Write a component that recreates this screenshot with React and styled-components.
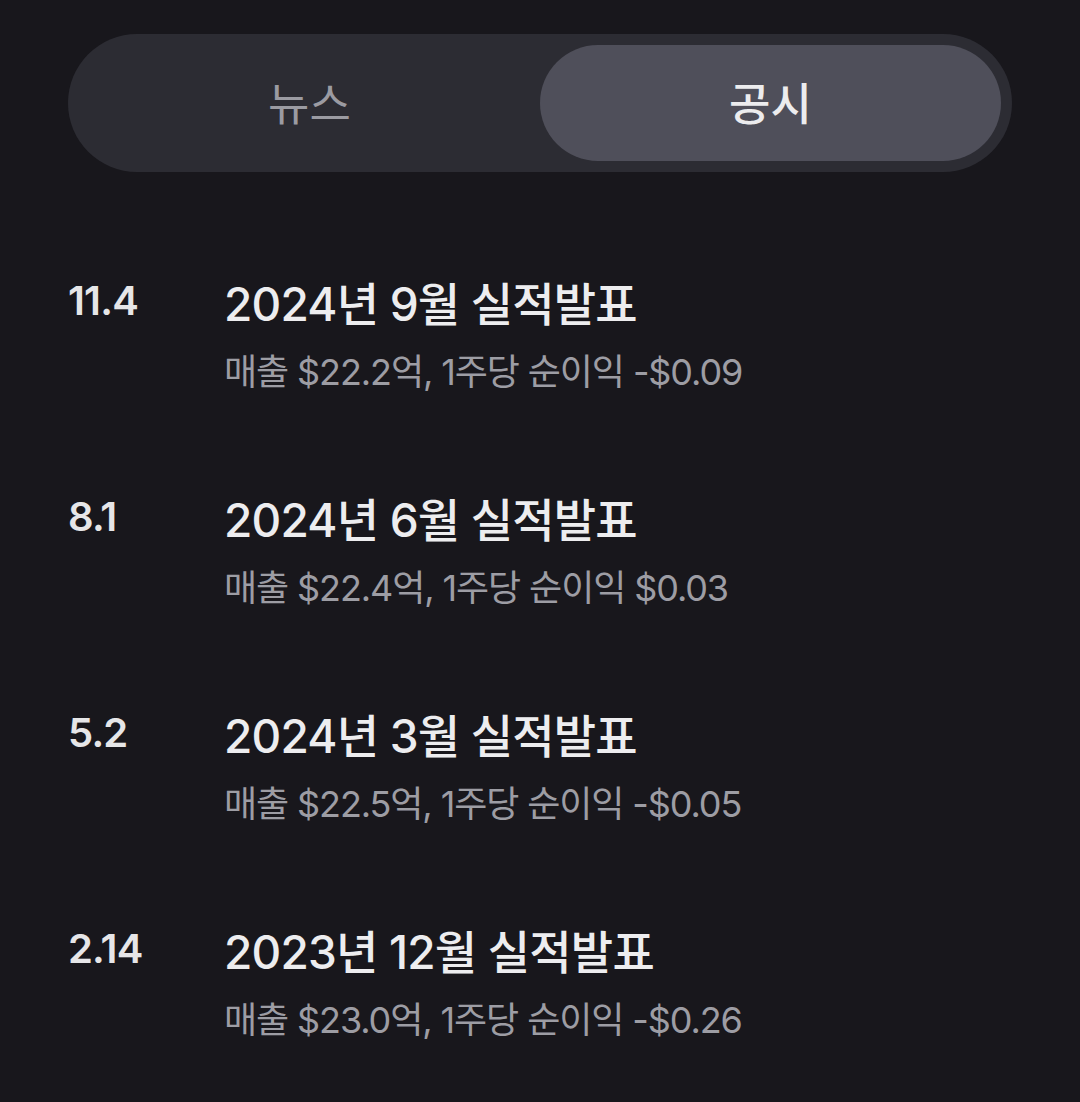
import React, { useState } from "react";
import styled, { createGlobalStyle } from "styled-components";

const GlobalStyle = createGlobalStyle`
    html, body {
        margin: 0;
        padding: 0;
        background: #18171c;
    }
    body {
        font-family: Inter, "Noto Sans CJK KR", sans-serif;
        -webkit-font-smoothing: antialiased;
    }
`;

const Page = styled.div`
    width: 1080px;
    height: 1102px;
    background: #18171c;
    padding: 34px 68px 0;
    box-sizing: border-box;
    overflow: hidden;
`;

const Tabs = styled.div`
    display: grid;
    grid-template-columns: 1fr 1fr;
    height: 138px;
    padding: 11px;
    box-sizing: border-box;
    background: #2c2c33;
    border-radius: 69px;
`;

const Tab = styled.button`
    border: 0;
    border-radius: 58px;
    padding: 0 0 4px;
    background: ${(p) => (p.$active ? "#4f4f5a" : "transparent")};
    color: ${(p) => (p.$active ? "#ececee" : "#9b9ba2")};
    font-family: inherit;
    font-size: 45px;
    font-weight: ${(p) => (p.$active ? 500 : 400)};
    cursor: pointer;
`;

const List = styled.div`
    display: flex;
    flex-direction: column;
    gap: 96px;
    margin-top: 104px;
`;

const Item = styled.div`
    display: grid;
    grid-template-columns: 156px 1fr;
`;

const Date = styled.div`
    color: #e6e6e8;
    font-size: 40px;
    font-weight: 600;
    letter-spacing: -0.8px;
    line-height: 50px;
`;

const Details = styled.div`
    display: flex;
    flex-direction: column;
    gap: 16px;
`;

const Title = styled.div`
    color: #ededef;
    font-size: 46px;
    font-weight: 500;
    letter-spacing: -0.8px;
    line-height: 56px;
`;

const Summary = styled.div`
    color: #9d9da4;
    font-size: 36px;
    font-weight: 400;
    letter-spacing: -1.1px;
    line-height: 48px;
`;

const reports = [
    { date: "11.4", title: "2024년 9월 실적발표", summary: "매출 $22.2억, 1주당 순이익 -$0.09" },
    { date: "8.1", title: "2024년 6월 실적발표", summary: "매출 $22.4억, 1주당 순이익 $0.03" },
    { date: "5.2", title: "2024년 3월 실적발표", summary: "매출 $22.5억, 1주당 순이익 -$0.05" },
    { date: "2.14", title: "2023년 12월 실적발표", summary: "매출 $23.0억, 1주당 순이익 -$0.26" },
];

const App = () => {
    const [tab, setTab] = useState("disclosure");

    return (
        <>
            <GlobalStyle />
            <Page>
                <Tabs>
                    <Tab $active={tab === "news"} onClick={() => setTab("news")}>뉴스</Tab>
                    <Tab $active={tab === "disclosure"} onClick={() => setTab("disclosure")}>공시</Tab>
                </Tabs>
                <List>
                    {reports.map((item, index) => (
                        <Item key={index}>
                            <Date>{item.date}</Date>
                            <Details>
                                <Title>{item.title}</Title>
                                <Summary>{item.summary}</Summary>
                            </Details>
                        </Item>
                    ))}
                </List>
            </Page>
        </>
    );
};

export default App;
